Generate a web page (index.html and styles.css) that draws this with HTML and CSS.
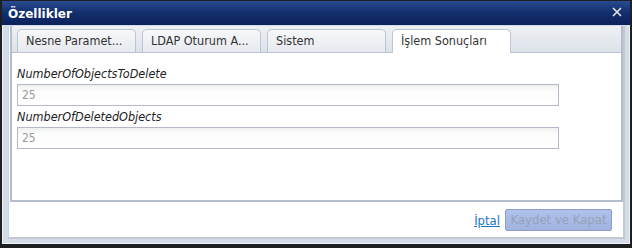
FILE: index.html
```html
<!DOCTYPE html>
<html lang="tr">
<head>
<meta charset="utf-8">
<title>Özellikler</title>
<link rel="stylesheet" href="styles.css">
</head>
<body>
<div class="dialog">
  <div class="titlebar">
    <span class="title">Özellikler</span>
    <span class="close" aria-label="Kapat">
      <svg width="10" height="10" viewBox="0 0 10 10"><path d="M1 1 L9 9 M9 1 L1 9" stroke="#e3e8f2" stroke-width="1.6" fill="none"/></svg>
    </span>
  </div>
  <div class="frame">
    <div class="tabpanel">
      <div class="tabstrip">
        <div class="tab">Nesne Paramet...</div>
        <div class="tab">LDAP Oturum A...</div>
        <div class="tab">Sistem</div>
        <div class="tab active">İşlem Sonuçları</div>
      </div>
      <div class="content">
        <div class="field-label">NumberOfObjectsToDelete</div>
        <div class="input">25</div>
        <div class="field-label">NumberOfDeletedObjects</div>
        <div class="input">25</div>
      </div>
    </div>
    <div class="footer">
      <a class="link" href="#">İptal</a>
      <button class="btn" disabled>Kaydet ve Kapat</button>
    </div>
  </div>
</div>
</body>
</html>
```
FILE: styles.css
```css
html, body {
  margin: 0;
  padding: 0;
}
body {
  background: #1e1f21;
  width: 632px;
  height: 248px;
  overflow: hidden;
  font-family: "DejaVu Sans Condensed", "DejaVu Sans", sans-serif;
  font-stretch: condensed;
}
.dialog {
  margin: 1px 0 0 2px;
  width: 628px;
  height: 243px;
  box-sizing: border-box;
  border: 1px solid #eef1f6;
  border-top: none;
  background: #d4dce7;
  display: flex;
  flex-direction: column;
}
.titlebar {
  height: 24px;
  flex: none;
  box-sizing: border-box;
  padding: 1px 7px 0 5px;
  margin: 0 -1px;
  padding-left: 6px;
  padding-right: 8px;
  background: linear-gradient(to bottom, #2a4b92 0%, #14306f 45%, #0b215c 100%);
  display: flex;
  align-items: center;
  justify-content: space-between;
}
.title {
  color: #ffffff;
  font-family: "DejaVu Sans", sans-serif;
  font-stretch: normal;
  font-weight: bold;
  font-size: 12px;
  line-height: 22px;
}
.close {
  display: flex;
  width: 10px;
  height: 10px;
  margin-top: -3px;
}
.frame {
  flex: 1;
  margin: 1px 4px 4px 5px;
  border-left: 1px solid #c8d6ec;
  border-right: 2px solid #c3c8d1;
  border-bottom: 2px solid #c3c8d1;
  background: #ffffff;
  display: flex;
  flex-direction: column;
}
.tabpanel {
  height: 176px;
  box-sizing: border-box;
  margin-left: 1px;
  border-left: 2px solid #b4bdcc;
  border-right: 2px solid #b4bdcc;
  border-bottom: 2px solid #b4bdcc;
  display: flex;
  flex-direction: column;
}
.tabstrip {
  height: 27px;
  flex: none;
  box-sizing: border-box;
  padding: 3px 0 0 5px;
  border-bottom: 1px solid #b9c2d1;
  background: linear-gradient(to bottom, #eef0f4 0%, #dde2e9 100%);
  display: flex;
  gap: 6px;
  align-items: flex-end;
}
.tab {
  width: 119px;
  height: 23px;
  box-sizing: border-box;
  border: 1px solid #bcc5d3;
  border-bottom: none;
  border-radius: 5px 5px 0 0;
  background: linear-gradient(to bottom, #f7f8fa 0%, #e6e9ee 100%);
  color: #333333;
  font-size: 12.5px;
  line-height: 21px;
  padding-left: 8px;
  white-space: nowrap;
  overflow: hidden;
}
.tab.active {
  height: 24px;
  margin-bottom: -1px;
  background: #ffffff;
}
.content {
  flex: 1;
  background: #ffffff;
  padding: 10px 0 0 5px;
}
.field-label {
  font-style: italic;
  font-size: 12.5px;
  line-height: 21px;
  color: #222222;
}
.input {
  width: 542px;
  height: 22px;
  box-sizing: border-box;
  border: 1px solid #b5b8c8;
  background: linear-gradient(to bottom, #eef0f0 0px, #fcfcfc 6px, #ffffff 100%);
  padding-left: 4px;
  color: #9a9a9a;
  font-size: 12px;
  line-height: 20px;
}
.footer {
  flex: 1;
  display: flex;
  justify-content: flex-end;
  align-items: center;
  gap: 5px;
  padding-right: 11px;
  padding-top: 1px;
}
.link {
  color: #1c74c9;
  font-size: 13px;
  text-decoration: underline;
}
.btn {
  width: 107px;
  height: 22px;
  box-sizing: border-box;
  border: 1px solid #8e9dc3;
  border-radius: 2px;
  background: linear-gradient(to bottom, #afc2ec 0%, #9fb3df 100%);
  color: #97a1b8;
  font-family: "DejaVu Sans Condensed", "DejaVu Sans", sans-serif;
  font-stretch: condensed;
  font-size: 13px;
  padding: 0;
  line-height: 20px;
}
```
